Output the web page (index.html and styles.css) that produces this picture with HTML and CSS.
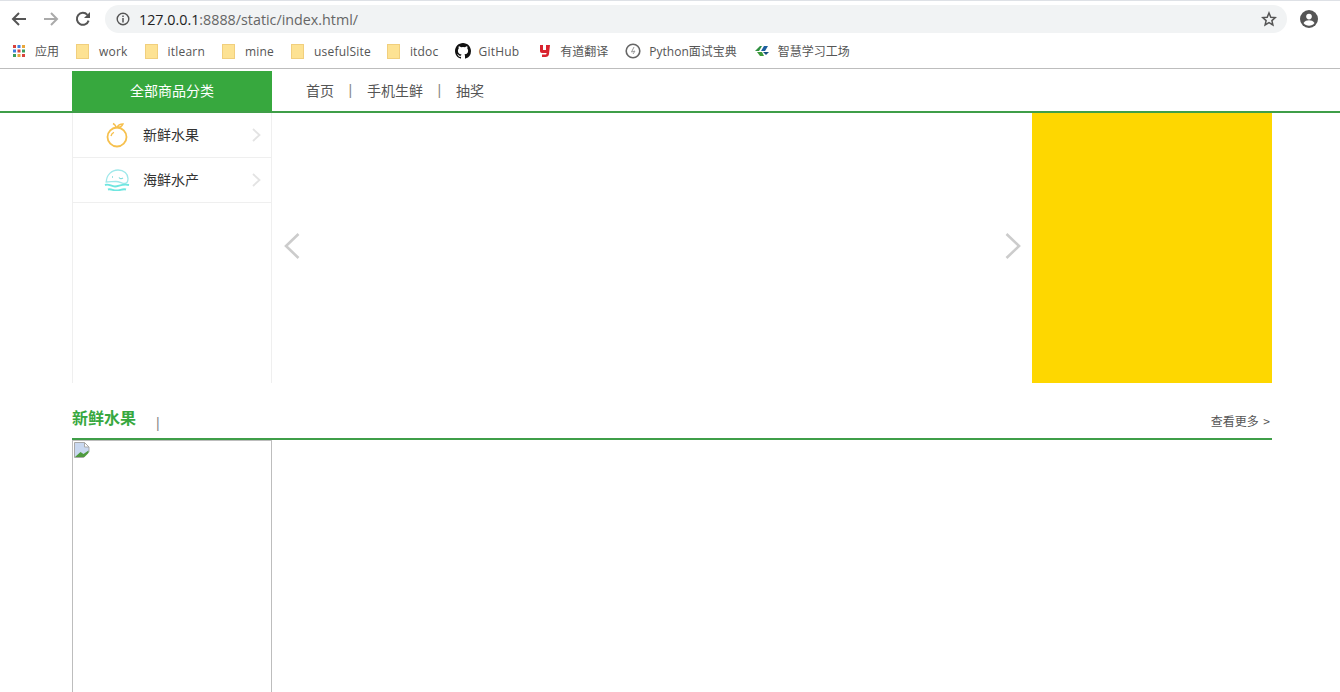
FILE: index.html
```html
<!DOCTYPE html>
<html lang="zh-CN">

<head>
    <meta charset="UTF-8">
    <meta name="viewport" content="width=device-width, initial-scale=1.0">
    <title>index</title>
    <link rel="stylesheet" href="styles.css">
</head>

<body>
    <!-- browser chrome -->
    <div class="chrome">
        <div class="toolbar">
            <svg class="tool-icon" width="16" height="16" viewBox="0 0 16 16"><path d="M15 8H2.500M8 2 2 8l6 6" fill="none" stroke="#555" stroke-width="2"/></svg>
            <svg class="tool-icon" width="16" height="16" viewBox="0 0 16 16"><path d="M1 8h12.500M8 2l6 6-6 6" fill="none" stroke="#aaa" stroke-width="2"/></svg>
            <svg class="tool-icon" width="16" height="16" viewBox="0 0 16 16"><path d="M13.600 9.600A6 6 0 1 1 12.400 3.800" fill="none" stroke="#555" stroke-width="2"/><path d="M15 1v6H9z" fill="#555"/></svg>
            <div class="omnibox">
                <svg class="info" width="14" height="14" viewBox="0 0 14 14"><circle cx="7" cy="7" r="5.800" fill="none" stroke="#555" stroke-width="1.400"/><path d="M7 6v4.400M7 3.600v1.400" stroke="#555" stroke-width="1.500"/></svg>
                <span class="url"><b>127.0.0.1</b>:8888/static/index.html/</span>
                <svg class="star" width="16" height="16" viewBox="0 0 16 16"><path d="m8 2 1.800 4.200 4.500.4-3.400 3 1 4.400L8 11.700 4.100 14l1-4.400-3.400-3 4.500-.4z" fill="none" stroke="#555" stroke-width="1.500"/></svg>
            </div>
            <svg class="avatar" width="18" height="18" viewBox="0 0 18 18"><circle cx="9" cy="9" r="9" fill="#555"/><circle cx="9" cy="6.600" r="2.800" fill="#fff"/><path d="M3.500 13c1.200-2 3.500-2.700 5.500-2.700s4.300.7 5.500 2.700C13.300 14.800 11.200 15.800 9 15.800S4.700 14.800 3.500 13z" fill="#fff"/></svg>
        </div>
        <div class="bookmarks">
            <a class="bookmark bookmark-apps">
                <svg width="14" height="14" viewBox="0 0 14 14">
                    <rect x="1" y="1" width="3" height="3" fill="#d9433b"/><rect x="5.500" y="1" width="3" height="3" fill="#3f7fe0"/><rect x="10" y="1" width="3" height="3" fill="#e8a63a"/>
                    <rect x="1" y="5.500" width="3" height="3" fill="#3f7fe0"/><rect x="5.500" y="5.500" width="3" height="3" fill="#d9433b"/><rect x="10" y="5.500" width="3" height="3" fill="#3a9d5d"/>
                    <rect x="1" y="10" width="3" height="3" fill="#3a9d5d"/><rect x="5.500" y="10" width="3" height="3" fill="#e8a63a"/><rect x="10" y="10" width="3" height="3" fill="#d9433b"/>
                </svg>
                应用
            </a>
            <a class="bookmark bookmark-latin"><span class="folder"></span>work</a>
            <a class="bookmark bookmark-latin"><span class="folder"></span>itlearn</a>
            <a class="bookmark bookmark-latin"><span class="folder"></span>mine</a>
            <a class="bookmark bookmark-latin bookmark-tight"><span class="folder"></span>usefulSite</a>
            <a class="bookmark bookmark-latin bookmark-tight"><span class="folder"></span>itdoc</a>
            <a class="bookmark bookmark-latin bookmark-github">
                <svg width="16" height="16" viewBox="0 0 16 16"><path fill="#111" d="M8 0C3.580 0 0 3.580 0 8c0 3.540 2.290 6.530 5.470 7.590.4.070.55-.17.550-.38v-1.340c-2.230.48-2.690-1.070-2.690-1.070-.36-.92-.89-1.170-.89-1.170-.73-.5.050-.49.050-.49.800.060 1.220.82 1.220.82.710 1.220 1.870.870 2.330.660.070-.52.280-.870.510-1.070-1.780-.2-3.640-.89-3.640-3.950 0-.870.310-1.590.820-2.150-.080-.2-.36-1.020.080-2.120 0 0 .670-.210 2.200.820a7.600 7.600 0 0 1 4 0c1.530-1.040 2.200-.82 2.200-.82.440 1.100.160 1.920.080 2.120.510.560.820 1.270.820 2.150 0 3.070-1.870 3.750-3.650 3.950.290.250.540.730.540 1.480v2.200c0 .210.150.460.550.380A8.010 8.010 0 0 0 16 8c0-4.420-3.580-8-8-8z"/></svg>
                GitHub
            </a>
            <a class="bookmark">
                <svg width="14" height="14" viewBox="0 0 14 14"><path d="M2 1h3v5h3V1h4l-1 9c-.2 2-1.500 3-3.500 3H4v-2.500h3.500c.6 0 1-.3 1-1V9H4C2.800 9 2 8.200 2 7z" fill="#d9232e"/></svg>
                有道翻译
            </a>
            <a class="bookmark">
                <svg width="16" height="16" viewBox="0 0 16 16"><circle cx="8" cy="8" r="6.800" fill="none" stroke="#666" stroke-width="1.600"/><path d="M9 4 6.500 9l3.500-1-2 3" fill="none" stroke="#999"/></svg>
                Python面试宝典
            </a>
            <a class="bookmark">
                <svg width="16" height="14" viewBox="0 0 16 14"><path d="M6 2 1 7h4l3-5z" fill="#2f8f3f"/><path d="M10 2 7 7h4l3-5z" fill="#1c5f9e"/><path d="M3 8h5l2 4H6z" fill="#3d9a3a"/><path d="M9 8h6l-3 3z" fill="#17507f"/></svg>
                智慧学习工场
            </a>
        </div>
    </div>

    <!-- page -->
    <div class="nav-bar">
        <div class="container nav-inner">
            <div class="all-cate">全部商品分类</div>
            <ul class="nav-list">
                <li>首页</li>
                <li class="sep">|</li>
                <li>手机生鲜</li>
                <li class="sep">|</li>
                <li>抽奖</li>
            </ul>
        </div>
    </div>

    <div class="container banner">
        <ul class="cate-list">
            <li class="cate-item">
                <svg class="cate-icon" width="24" height="26" viewBox="0 0 24 26"><circle cx="12" cy="15" r="9.500" fill="none" stroke="#f6c04e" stroke-width="1.800"/><path d="M6 14c.5-2 1.500-3.200 3-3.700M11 6C11 4 10 2.500 8 1.500M12 5.500c1-2.500 3-3.500 6-3.500-1 2.500-3 3.500-6 3.500z" fill="none" stroke="#f6c04e" stroke-width="1.400"/></svg>
                <span class="cate-name">新鲜水果</span>
                <svg class="chevron" width="9" height="14" viewBox="0 0 9 14"><path d="m1 1 6.500 6L1 13" fill="none" stroke="#e3e3e3" stroke-width="1.800"/></svg>
            </li>
            <li class="cate-item">
                <svg class="cate-icon" width="26" height="22" viewBox="0 0 26 22"><path d="M2.500 13C2 6 8 1 14 1c6 0 10 4 10 8.500 0 3-1.500 5-3.500 5-2.500 0-5-2-8.500-2-3.500 0-6 .5-10.500.5z" fill="none" stroke="#9fe8ea" stroke-width="1.300"/><path d="M15 8.500c1 1.500 2.500 1.500 4 .5M8 8h1" fill="none" stroke="#7fdcdc" stroke-width="1.300"/><path d="M1 16c4-1.500 6 1.500 10 1.500s7-3 14-1.500M4 20.500c3-1 5 1 8.500 1s6-2 9.500-1" fill="none" stroke="#6fe6e0" stroke-width="1.900"/></svg>
                <span class="cate-name">海鲜水产</span>
                <svg class="chevron" width="9" height="14" viewBox="0 0 9 14"><path d="m1 1 6.500 6L1 13" fill="none" stroke="#e3e3e3" stroke-width="1.800"/></svg>
            </li>
        </ul>
        <div class="slider">
            <svg width="18" height="28" viewBox="0 0 18 28"><path d="M15.500 2 3 14l12.500 12" fill="none" stroke="#ccc" stroke-width="2.600"/></svg>
            <svg width="18" height="28" viewBox="0 0 18 28"><path d="M2.500 2 15 14 2.500 26" fill="none" stroke="#ccc" stroke-width="2.600"/></svg>
        </div>
        <div class="ad"></div>
    </div>

    <div class="container floor">
        <div class="floor-head">
            <h3 class="floor-title">新鲜水果</h3>
            <span class="floor-sep">|</span>
            <a class="floor-more">查看更多 &gt;</a>
        </div>
        <div class="goods-pic">
            <svg width="18" height="18" viewBox="0 0 18 18"><path d="M1.500 1.500h10l4.500 4.500v10.500H1.500z" fill="#c9d8f0" stroke="#a9a9a9"/><path d="M11.500 1.500V6H16z" fill="#fff" stroke="#a9a9a9"/><path d="M2 16l5.500-5 3 2 5-3.500V16z" fill="#4f9a3f"/><path d="M9.500 18 18 9.500V18z" fill="#fff"/></svg>
        </div>
    </div>
</body>

</html>
```

FILE: styles.css
```css
* {
    box-sizing: border-box;
}

html,
body {
    margin: 0;
    padding: 0;
    height: 692px;
    overflow: hidden;
}

body {
    background-color: #fff;
    font-family: "Noto Sans CJK SC", "Noto Sans", sans-serif;
    color: #333;
}

ul {
    list-style: none;
    margin: 0;
    padding: 0;
}

.container {
    width: 1200px;
    margin-left: 72px;
}

/* browser chrome */
.chrome {
    height: 69px;
    border-top: 1px solid #dee1e6;
    border-bottom: 1px solid #bdbdbd;
    padding-top: 4px;
}

.toolbar {
    display: flex;
    align-items: center;
    height: 28px;
    padding-left: 11px;
}

.tool-icon {
    margin-right: 16px;
}

.omnibox {
    display: flex;
    align-items: center;
    width: 1182px;
    height: 28px;
    margin-left: -2px;
    padding: 0 10px 0 11px;
    background-color: #f1f3f4;
    border-radius: 14px;
}

.info {
    margin-right: 9px;
}

.url {
    flex: 1;
    font-family: "Open Sans", sans-serif;
    font-size: 14.3px;
    color: #666;
}

.url b {
    font-weight: normal;
    color: #222;
}

.avatar {
    margin-left: 13px;
}

.bookmarks {
    display: flex;
    align-items: center;
    height: 32px;
    margin-top: 2px;
    padding-left: 12px;
}

.bookmark {
    display: flex;
    align-items: center;
    gap: 8px;
    margin-right: 17px;
    font-family: "Open Sans", "Noto Sans CJK SC", sans-serif;
    font-size: 12px;
    color: #555;
}

.bookmark-apps {
    gap: 9px;
}

.bookmark-latin {
    letter-spacing: 0.2px;
}

.bookmark-tight {
    margin-right: 16px;
}

.bookmark-github {
    margin-right: 19px;
}

.folder {
    width: 13px;
    height: 15px;
    background-color: #fde293;
    border: 1px solid #f1cf7d;
    margin-right: 2px;
}

/* page nav */
.nav-bar {
    height: 44px;
    border-bottom: 2px solid #3f9e48;
}

.nav-inner {
    display: flex;
    padding-top: 2px;
}

.all-cate {
    width: 200px;
    height: 40px;
    line-height: 38px;
    background-color: #37a83e;
    color: #fff;
    font-size: 14px;
    text-align: center;
}

.nav-list {
    display: flex;
    align-items: center;
    gap: 14.5px;
    height: 38px;
    padding-left: 34px;
    font-size: 14px;
    color: #555;
}

.sep {
    font-family: "Liberation Sans", sans-serif;
    width: 4px;
    color: #888;
}

/* banner row */
.banner {
    display: flex;
    height: 270px;
}

.cate-list {
    width: 200px;
    border-left: 1px solid #efefef;
    border-right: 1px solid #efefef;
}

.cate-item {
    display: flex;
    align-items: center;
    height: 45px;
    border-bottom: 1px solid #efefef;
    font-size: 14px;
    color: #333;
}

.cate-icon {
    margin-left: 31px;
    width: 26px;
}

.cate-name {
    flex: 1;
    margin-left: 13px;
    padding-bottom: 2px;
}

.chevron {
    margin-right: 10px;
}

.slider {
    display: flex;
    align-items: center;
    justify-content: space-between;
    width: 760px;
    padding: 0 10px 4px 11px;
}

.ad {
    width: 240px;
    background-color: #fed700;
}

/* floor */
.floor {
    margin-top: 20px;
}

.floor-head {
    display: flex;
    align-items: flex-end;
    height: 37px;
    border-bottom: 2px solid #3f9e48;
}

.floor-title {
    margin: 0;
    font-size: 16px;
    font-weight: bold;
    color: #37a83e;
    line-height: 29px;
    height: 35px;
}

.floor-sep {
    margin-left: 20px;
    height: 27px;
    font-family: "Liberation Sans", sans-serif;
    font-size: 14px;
    color: #888;
    line-height: 24px;
}

.floor-more {
    margin-left: auto;
    height: 30px;
    padding-right: 2px;
    font-size: 12px;
    word-spacing: 2px;
    color: #555;
    line-height: 25px;
}

.goods-pic {
    width: 200px;
    height: 260px;
    border: 1px solid #bdbdbd;
}

.goods-pic svg {
    display: block;
}
```
